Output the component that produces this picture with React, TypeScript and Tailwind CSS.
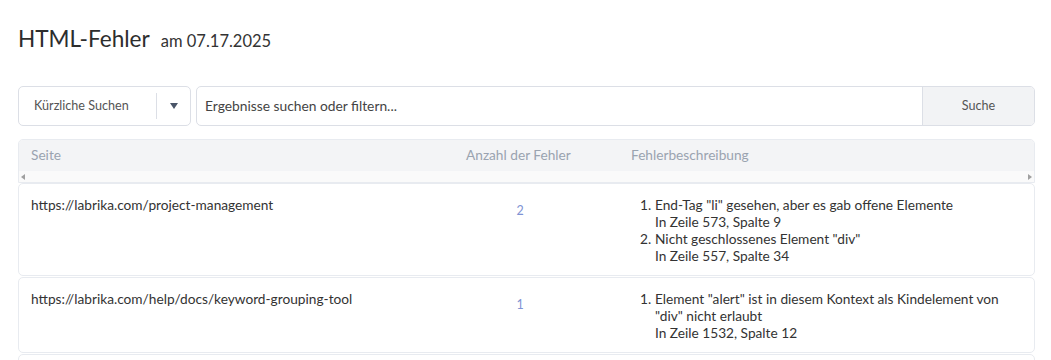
import React from "react";

const rows = [
  {
    url: "https://labrika.com/project-management",
    count: 2,
    errors: [
      { text: 'End-Tag "li" gesehen, aber es gab offene Elemente', where: "In Zeile 573, Spalte 9" },
      { text: 'Nicht geschlossenes Element "div"', where: "In Zeile 557, Spalte 34" },
    ],
  },
  {
    url: "https://labrika.com/help/docs/keyword-grouping-tool",
    count: 1,
    errors: [
      {
        text: 'Element "alert" ist in diesem Kontext als Kindelement von "div" nicht erlaubt',
        where: "In Zeile 1532, Spalte 12",
      },
    ],
  },
];

export default function App() {
  return (
    <div className="bg-white w-[1051px] h-[360px] overflow-hidden pl-[18px] pr-[16px] font-['Lato','Noto_Sans',sans-serif] text-[#333]">
      {/* Title */}
      <div className="flex items-baseline pt-[25px] h-[86px]">
        <h1 className="text-[22.6px] leading-[28px] text-[#2d2d2d]">HTML-Fehler</h1>
        <span className="ml-[11px] text-[16.5px] text-[#333]">am 07.17.2025</span>
      </div>

      {/* Search bar */}
      <div className="flex gap-[5px] h-[40px]">
        <div className="w-[173px] flex items-center border border-[#dcdfe6] rounded-[5px] bg-white">
          <span className="pl-[15px] w-[137px] text-[12.6px] text-[#555]">Kürzliche Suchen</span>
          <span className="h-[26px] w-px bg-[#dcdfe6]" />
          <span className="flex-1 flex justify-center">
            <svg width="8" height="6" viewBox="0 0 8 6">
              <path d="M0 0h8L4 6z" fill="#4a5568" />
            </svg>
          </span>
        </div>
        <div className="flex-1 flex border border-[#dcdfe6] rounded-[5px] overflow-hidden">
          <div className="flex-1 flex items-center pl-[8px] text-[13.8px] text-[#444]">
            Ergebnisse suchen oder filtern...
          </div>
          <div className="w-[112px] flex items-center justify-center bg-[#f2f3f5] border-l border-[#dcdfe6] text-[12.6px] text-[#555]">
            Suche
          </div>
        </div>
      </div>

      {/* Table */}
      <div className="mt-[13px]">
        <div className="border border-[#e8ebf0] rounded-t-[5px] overflow-hidden">
          <div className="flex h-[31px] items-center bg-[#f3f4f6] text-[13.7px] text-[#9aa3b0]">
            <div className="w-[435px] pl-[12px]">Seite</div>
            <div className="w-[165px] pl-[12px]">Anzahl der Fehler</div>
            <div className="flex-1 pl-[12px]">Fehlerbeschreibung</div>
          </div>
          <div className="flex h-[11px] items-center justify-between bg-[#fafafa] px-[2px]">
            <svg width="4" height="6" viewBox="0 0 4 6">
              <path d="M4 0v6L0 3z" fill="#a0a0a0" />
            </svg>
            <svg width="4" height="6" viewBox="0 0 4 6">
              <path d="M0 0v6l4-3z" fill="#a0a0a0" />
            </svg>
          </div>
        </div>

        {rows.map((r) => (
          <div
            key={r.url}
            className="flex border border-[#e8ebf0] rounded-[5px] bg-white pt-[12px] pb-[11px] mb-[1px] text-[13.7px]"
          >
            <div className="w-[435px] pl-[12px] leading-[17px]">{r.url}</div>
            <div className="w-[132px] text-center pt-[6px] leading-[17px] text-[#7f93d4] text-[12.5px]">
              {r.count}
            </div>
            <ol className="flex-1 pl-[54px] pr-[28px] leading-[17px]">
              {r.errors.map((e, i) => (
                <li key={i} className="flex">
                  <span className="w-[15px] shrink-0">{i + 1}.</span>
                  <span>
                    {e.text}
                    <br />
                    {e.where}
                  </span>
                </li>
              ))}
            </ol>
          </div>
        ))}
        <div className="border border-[#e8ebf0] rounded-[5px] h-[40px]" />
      </div>
    </div>
  );
}
